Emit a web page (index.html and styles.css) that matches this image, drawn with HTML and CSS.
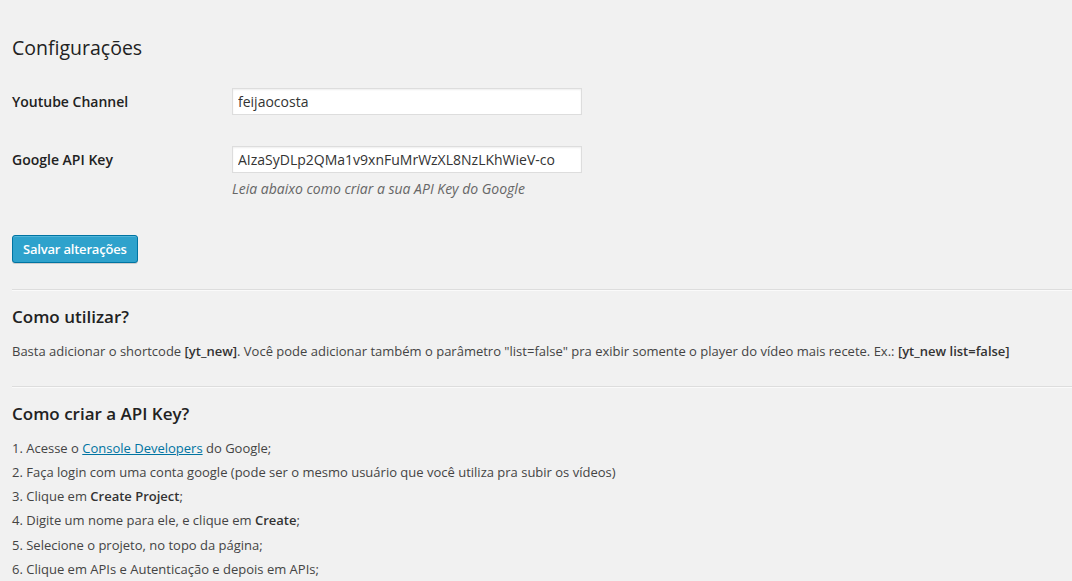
FILE: index.html
```html
<!DOCTYPE html>
<html lang="pt-BR">
<head>
<meta charset="utf-8">
<title>Configurações</title>
<link rel="stylesheet" href="styles.css">
</head>
<body>
<div class="wrap">
  <h2 class="page-title">Configurações</h2>
  <form class="settings">
    <div class="row">
      <label class="row-label" for="ch">Youtube Channel</label>
      <div class="row-field">
        <input id="ch" class="text-input" type="text" value="feijaocosta">
      </div>
    </div>
    <div class="row">
      <label class="row-label" for="key">Google API Key</label>
      <div class="row-field">
        <input id="key" class="text-input" type="text" value="AIzaSyDLp2QMa1v9xnFuMrWzXL8NzLKhWieV-co">
        <p class="description">Leia abaixo como criar a sua API Key do Google</p>
      </div>
    </div>
    <p class="submit"><button type="button" class="button-primary">Salvar alterações</button></p>
  </form>
  <hr class="sep">
  <h3 class="section-title">Como utilizar?</h3>
  <p class="usage">Basta adicionar o shortcode <strong>[yt_new]</strong>. Você pode adicionar também o parâmetro "list=false" pra exibir somente o player do vídeo mais recete. Ex.: <strong>[yt_new list=false]</strong></p>
  <hr class="sep">
  <h3 class="section-title">Como criar a API Key?</h3>
  <ul class="steps">
    <li>1. Acesse o <a href="#">Console Developers</a> do Google;</li>
    <li>2. Faça login com uma conta google (pode ser o mesmo usuário que você utiliza pra subir os vídeos)</li>
    <li>3. Clique em <strong>Create Project</strong>;</li>
    <li>4. Digite um nome para ele, e clique em <strong>Create</strong>;</li>
    <li>5. Selecione o projeto, no topo da página;</li>
    <li>6. Clique em APIs e Autenticação e depois em APIs;</li>
  </ul>
</div>
</body>
</html>
```

FILE: styles.css
```css
html, body {
  margin: 0;
  padding: 0;
}
body {
  background: #f1f1f1;
  color: #444;
  font-family: "Open Sans", "Noto Sans", sans-serif;
  font-size: 13px;
  line-height: 1.4em;
  overflow: hidden;
}
.wrap {
  padding-left: 12px;
}
.page-title {
  margin: 0;
  padding-top: 33px;
  font-size: 19.5px;
  font-weight: 400;
  line-height: 29px;
  color: #222;
}
.settings {
  margin: 0;
  padding-top: 11px;
}
.row {
  display: flex;
  align-items: flex-start;
}
.row-label {
  box-sizing: border-box;
  width: 210px;
  flex: none;
  padding: 20px 10px 20px 0;
  font-size: 14px;
  font-weight: 600;
  line-height: 1.3;
  color: #222;
}
.row-field {
  padding: 15px 10px;
}
.text-input {
  box-sizing: border-box;
  display: block;
  width: 350px;
  height: 27px;
  margin: 0;
  padding: 3px 5px;
  border: 1px solid #ddd;
  background: #fff;
  box-shadow: inset 0 1px 2px rgba(0,0,0,0.07);
  font-family: "Open Sans", "Noto Sans", sans-serif;
  font-size: 14px;
  color: #333;
  outline: none;
}
.description {
  margin: 7px 0 0;
  font-style: italic;
  font-size: 14px;
  line-height: 18px;
  color: #666;
}
.submit {
  margin: 0;
  padding-top: 22px;
}
.button-primary {
  box-sizing: border-box;
  height: 28px;
  margin: 0;
  padding: 0 10px 1px;
  border: 1px solid #0074a2;
  border-radius: 3px;
  background: #2ea2cc;
  box-shadow: inset 0 1px 0 rgba(120,200,230,0.5), 0 1px 0 rgba(0,0,0,0.15);
  color: #fff;
  font-family: "Open Sans", "Noto Sans", sans-serif;
  font-size: 13px;
  font-weight: 600;
  letter-spacing: -0.2px;
  line-height: 26px;
  cursor: pointer;
}
.sep {
  margin: 26px 0 0;
  height: 0;
  border: 0;
  border-top: 1px solid #ddd;
  border-bottom: 1px solid #fafafa;
}
.usage + .sep {
  margin-top: 24px;
}
.section-title {
  margin: 14px 0 13px;
  font-size: 17px;
  font-weight: 600;
  line-height: 24px;
  color: #222;
}
.usage {
  margin: 0;
  line-height: 19.5px;
}
.usage strong, .steps strong {
  font-weight: 600;
  color: #333;
}
.steps {
  list-style: none;
  margin: 0;
  padding: 0;
}
.steps li {
  margin: 0 0 6px;
  line-height: 18.2px;
}
.steps a {
  color: #0074a2;
  text-decoration: underline;
}
```
